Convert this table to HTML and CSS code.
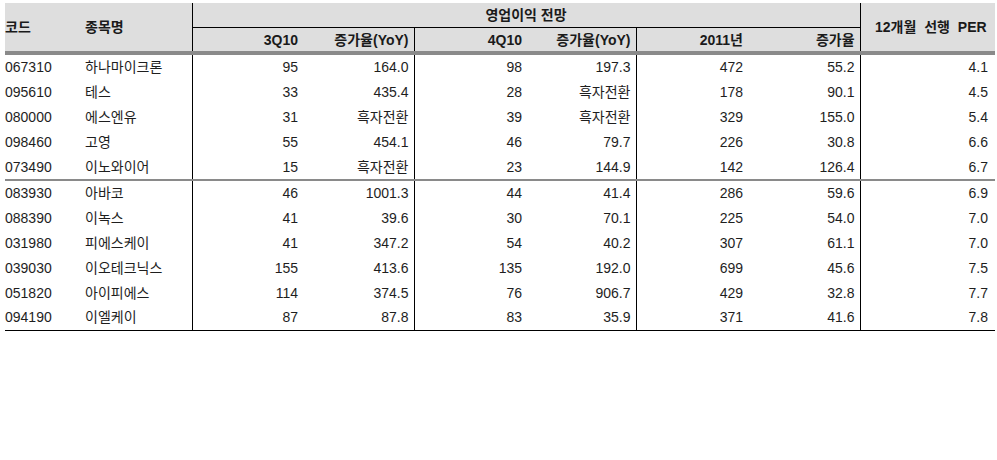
FILE: index.html
```html
<!DOCTYPE html>
<html lang="ko">
<head>
<meta charset="utf-8">
<title>영업이익 전망</title>
<link rel="stylesheet" href="styles.css">
</head>
<body>
<table class="tbl">
  <colgroup>
    <col class="w-code"><col class="w-name"><col class="w-n1"><col class="w-n2"><col class="w-n3"><col class="w-n4"><col class="w-n5"><col class="w-n6"><col class="w-per">
  </colgroup>
  <thead>
    <tr class="h1">
      <th rowspan="2" class="left code">코드</th>
      <th rowspan="2" class="left">종목명</th>
      <th colspan="6" class="group vl">영업이익 전망</th>
      <th rowspan="2" class="per vl">12개월 선행 PER</th>
    </tr>
    <tr class="h2">
      <th class="vl">3Q10</th>
      <th>증가율(YoY)</th>
      <th class="vl">4Q10</th>
      <th>증가율(YoY)</th>
      <th class="vl">2011년</th>
      <th>증가율</th>
    </tr>
  </thead>
  <tbody>
    <tr><td class="left">067310</td><td class="left">하나마이크론</td><td class="vl">95</td><td>164.0</td><td class="vl">98</td><td>197.3</td><td class="vl">472</td><td>55.2</td><td class="vl">4.1</td></tr>
    <tr><td class="left">095610</td><td class="left">테스</td><td class="vl">33</td><td>435.4</td><td class="vl">28</td><td>흑자전환</td><td class="vl">178</td><td>90.1</td><td class="vl">4.5</td></tr>
    <tr><td class="left">080000</td><td class="left">에스엔유</td><td class="vl">31</td><td>흑자전환</td><td class="vl">39</td><td>흑자전환</td><td class="vl">329</td><td>155.0</td><td class="vl">5.4</td></tr>
    <tr><td class="left">098460</td><td class="left">고영</td><td class="vl">55</td><td>454.1</td><td class="vl">46</td><td>79.7</td><td class="vl">226</td><td>30.8</td><td class="vl">6.6</td></tr>
    <tr class="sep"><td class="left">073490</td><td class="left">이노와이어</td><td class="vl">15</td><td>흑자전환</td><td class="vl">23</td><td>144.9</td><td class="vl">142</td><td>126.4</td><td class="vl">6.7</td></tr>
    <tr><td class="left">083930</td><td class="left">아바코</td><td class="vl">46</td><td>1001.3</td><td class="vl">44</td><td>41.4</td><td class="vl">286</td><td>59.6</td><td class="vl">6.9</td></tr>
    <tr><td class="left">088390</td><td class="left">이녹스</td><td class="vl">41</td><td>39.6</td><td class="vl">30</td><td>70.1</td><td class="vl">225</td><td>54.0</td><td class="vl">7.0</td></tr>
    <tr><td class="left">031980</td><td class="left">피에스케이</td><td class="vl">41</td><td>347.2</td><td class="vl">54</td><td>40.2</td><td class="vl">307</td><td>61.1</td><td class="vl">7.0</td></tr>
    <tr><td class="left">039030</td><td class="left">이오테크닉스</td><td class="vl">155</td><td>413.6</td><td class="vl">135</td><td>192.0</td><td class="vl">699</td><td>45.6</td><td class="vl">7.5</td></tr>
    <tr><td class="left">051820</td><td class="left">아이피에스</td><td class="vl">114</td><td>374.5</td><td class="vl">76</td><td>906.7</td><td class="vl">429</td><td>32.8</td><td class="vl">7.7</td></tr>
    <tr class="last"><td class="left">094190</td><td class="left">이엘케이</td><td class="vl">87</td><td>87.8</td><td class="vl">83</td><td>35.9</td><td class="vl">371</td><td>41.6</td><td class="vl">7.8</td></tr>
  </tbody>
</table>
</body>
</html>
```

FILE: styles.css
```css
html, body {
  margin: 0;
  padding: 0;
  background: #ffffff;
}

.tbl {
  border-collapse: collapse;
  table-layout: fixed;
  width: 990px;
  margin: 3px 0 0 5px;
  font-family: "Liberation Sans", "Noto Sans CJK KR", sans-serif;
  font-size: 14px;
  color: #1e1e1e;
}

.w-code { width: 80px; }
.w-name { width: 107px; }
.w-n1 { width: 111px; }
.w-n2 { width: 111px; }
.w-n3 { width: 113px; }
.w-n4 { width: 109px; }
.w-n5 { width: 112px; }
.w-n6 { width: 112px; }
.w-per { width: 135px; }

.tbl th,
.tbl td {
  padding: 0 5px 0 0;
  text-align: right;
  white-space: nowrap;
  line-height: 16px;
}

.tbl thead th {
  background: #dedede;
  font-weight: bold;
  font-size: 14px;
  color: #1a1a1a;
  vertical-align: middle;
}

.tbl .h1 th { height: 24px; }
.tbl .h2 th { height: 23px; }

.tbl thead th[rowspan],
.tbl .h2 th {
  border-bottom: 4px solid #8a8a8a;
}

.tbl .group {
  text-align: center;
  border-bottom: 1px solid #000;
  padding: 0;
}

.tbl .per {
  text-align: center;
  padding: 0 0 0 6px;
  word-spacing: 4px;
}

.tbl .left {
  text-align: left;
  padding: 0;
}

.tbl .vl {
  border-left: 1px solid #000;
}

.tbl tbody td {
  height: 24.8px;
  vertical-align: middle;
}

.tbl tbody td.vl:last-child { padding-right: 7px; }

.tbl .sep td {
  border-bottom: 2px solid #8a8a8a;
}

.tbl .last td {
  border-bottom: 1px solid #000;
}
```
